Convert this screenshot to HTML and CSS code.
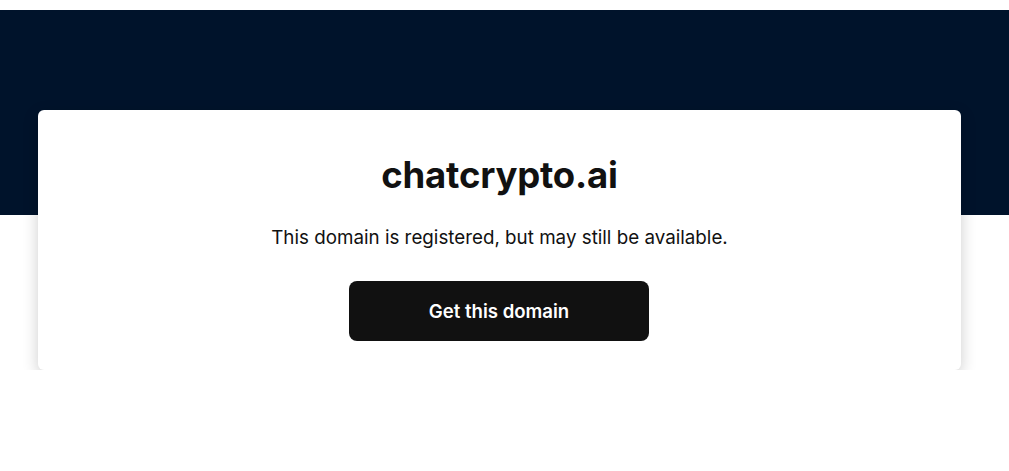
FILE: index.html
```html
<!DOCTYPE html>
<html lang="en">
<head>
    <meta charset="UTF-8">
    <meta name="viewport" content="width=device-width, initial-scale=1.0">
    <title>chatcrypto.ai</title>
    <link rel="stylesheet" href="styles.css">
</head>
<body>
    <div class="hero"></div>
    <div class="container">
        <div class="domain-card">
            <h1>chatcrypto.ai</h1>
            <p>This domain is registered, but may still be available.</p>
            <a href="#" class="buy-button">Get this domain</a>
        </div>
    </div>
</body>
</html>
```

FILE: styles.css
```css
* {
    margin: 0;
    padding: 0;
    box-sizing: border-box;
}

body {
    font-family: Inter, 'Noto Sans', sans-serif;
    background: #ffffff;
    color: #111111;
    padding-top: 10px;
}

.hero {
    background: #00132b;
    height: 205px;
}

.container {
    padding: 0 48px 0 38px;
    margin-top: -105px;
}

.domain-card {
    background: #ffffff;
    border-radius: 6px;
    box-shadow: 0 5px 16px rgba(0, 0, 0, 0.2);
    display: flex;
    flex-direction: column;
    align-items: center;
    padding: 43px 20px 29px;
}

.domain-card h1 {
    font-size: 36.5px;
    font-weight: 700;
    line-height: 44px;
    letter-spacing: -0.2px;
}

.domain-card p {
    font-size: 18.8px;
    line-height: 28px;
    margin-top: 27px;
    color: #111111;
}

.buy-button {
    margin-top: 29px;
    margin-right: 1px;
    width: 300px;
    height: 60px;
    background: #111111;
    color: #ffffff;
    border-radius: 8px;
    display: flex;
    align-items: center;
    justify-content: center;
    font-size: 18.6px;
    font-weight: 600;
    text-decoration: none;
}
```
